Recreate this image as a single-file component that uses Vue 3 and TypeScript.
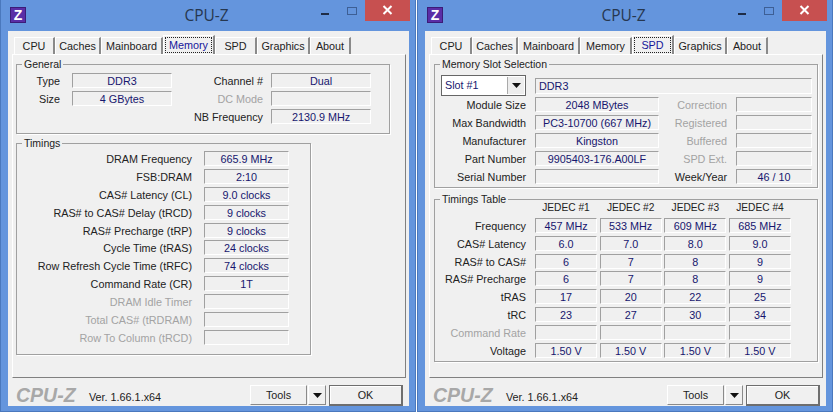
<script setup lang="ts">
interface Row { label: string; value: string; off?: boolean }

const tabs = [
  { name: 'CPU', width: 41 },
  { name: 'Caches', width: 46 },
  { name: 'Mainboard', width: 62 },
  { name: 'Memory', width: 52 },
  { name: 'SPD', width: 42 },
  { name: 'Graphics', width: 53 },
  { name: 'About', width: 41 },
]
const windows = ['Memory', 'SPD']

const timings: Row[] = [
  { label: 'DRAM Frequency', value: '665.9 MHz' },
  { label: 'FSB:DRAM', value: '2:10' },
  { label: 'CAS# Latency (CL)', value: '9.0 clocks' },
  { label: 'RAS# to CAS# Delay (tRCD)', value: '9 clocks' },
  { label: 'RAS# Precharge (tRP)', value: '9 clocks' },
  { label: 'Cycle Time (tRAS)', value: '24 clocks' },
  { label: 'Row Refresh Cycle Time (tRFC)', value: '74 clocks' },
  { label: 'Command Rate (CR)', value: '1T' },
  { label: 'DRAM Idle Timer', value: '', off: true },
  { label: 'Total CAS# (tRDRAM)', value: '', off: true },
  { label: 'Row To Column (tRCD)', value: '', off: true },
]
const slotRows = [
  { label: 'Module Size', value: '2048 MBytes', side: 'Correction', sideValue: '', off: true },
  { label: 'Max Bandwidth', value: 'PC3-10700 (667 MHz)', side: 'Registered', sideValue: '', off: true },
  { label: 'Manufacturer', value: 'Kingston', side: 'Buffered', sideValue: '', off: true },
  { label: 'Part Number', value: '9905403-176.A00LF', side: 'SPD Ext.', sideValue: '', off: true },
  { label: 'Serial Number', value: '', side: 'Week/Year', sideValue: '46 / 10', off: false },
]
const jedec = ['JEDEC #1', 'JEDEC #2', 'JEDEC #3', 'JEDEC #4']
const table = [
  { label: 'Frequency', values: ['457 MHz', '533 MHz', '609 MHz', '685 MHz'] },
  { label: 'CAS# Latency', values: ['6.0', '7.0', '8.0', '9.0'] },
  { label: 'RAS# to CAS#', values: ['6', '7', '8', '9'] },
  { label: 'RAS# Precharge', values: ['6', '7', '8', '9'] },
  { label: 'tRAS', values: ['17', '20', '22', '25'] },
  { label: 'tRC', values: ['23', '27', '30', '34'] },
  { label: 'Command Rate', values: ['', '', '', ''], off: true },
  { label: 'Voltage', values: ['1.50 V', '1.50 V', '1.50 V', '1.50 V'] },
]
</script>

<template>
  <div class="desktop">
    <section v-for="win in windows" :key="win" class="window">
      <header class="titlebar">
        <div class="title-left"><span class="app-icon">Z</span></div>
        <div class="title">CPU-Z</div>
        <div class="controls">
          <span class="minimize"></span>
          <span class="maximize"></span>
          <span class="close">
            <svg width="11" height="10" viewBox="0 0 11 10">
              <path d="M1.5 1 L9.5 9 M9.5 1 L1.5 9" stroke="#fff" stroke-width="2" fill="none" />
            </svg>
          </span>
        </div>
      </header>

      <div class="client">
        <nav class="tabs">
          <div
            v-for="tab in tabs"
            :key="tab.name"
            class="tab"
            :class="{ active: tab.name === win }"
            :style="{ width: tab.width + 'px' }"
          >
            <span class="tab-label">{{ tab.name }}</span>
          </div>
        </nav>

        <main class="panel">
          <template v-if="win === 'Memory'">
            <fieldset class="group general">
              <legend>General</legend>
              <div class="general-grid">
                <span class="label first">Type</span>
                <span class="field">DDR3</span>
                <span class="label second">Channel #</span>
                <span class="field">Dual</span>
                <span class="label first">Size</span>
                <span class="field">4 GBytes</span>
                <span class="label second off">DC Mode</span>
                <span class="field"></span>
                <span></span>
                <span></span>
                <span class="label second">NB Frequency</span>
                <span class="field">2130.9 MHz</span>
              </div>
            </fieldset>

            <fieldset class="group timings">
              <legend>Timings</legend>
              <div class="timing-grid">
                <template v-for="row in timings" :key="row.label">
                  <span class="label" :class="{ off: row.off }">{{ row.label }}</span>
                  <span class="field">{{ row.value }}</span>
                </template>
              </div>
            </fieldset>
          </template>

          <template v-else>
            <fieldset class="group slot">
              <legend>Memory Slot Selection</legend>
              <div class="slot-head">
                <div class="select">
                  <span class="select-text">Slot #1</span>
                  <span class="select-arrow">
                    <svg width="9" height="5" viewBox="0 0 9 5"><path d="M0 0 H9 L4.5 5 Z" fill="#111" /></svg>
                  </span>
                </div>
                <span class="field wide">DDR3</span>
              </div>
              <div class="slot-grid">
                <template v-for="row in slotRows" :key="row.label">
                  <span class="label">{{ row.label }}</span>
                  <span class="field">{{ row.value }}</span>
                  <span class="label" :class="{ off: row.off }">{{ row.side }}</span>
                  <span class="field">{{ row.sideValue }}</span>
                </template>
              </div>
            </fieldset>

            <fieldset class="group table-group">
              <legend>Timings Table</legend>
              <div class="jedec-head">
                <span></span>
                <span v-for="name in jedec" :key="name" class="jedec">{{ name }}</span>
              </div>
              <div class="jedec-grid">
                <template v-for="row in table" :key="row.label">
                  <span class="label" :class="{ off: row.off }">{{ row.label }}</span>
                  <span v-for="(value, i) in row.values" :key="i" class="field">{{ value }}</span>
                </template>
              </div>
            </fieldset>
          </template>
        </main>

        <footer class="footer">
          <span class="logo">CPU-Z</span>
          <span class="version">Ver. 1.66.1.x64</span>
          <div class="buttons">
            <button class="btn tools" type="button">Tools</button>
            <button class="btn arrow" type="button">
              <svg width="9" height="5" viewBox="0 0 9 5"><path d="M0 0 H9 L4.5 5 Z" fill="#111" /></svg>
            </button>
            <button class="btn ok" type="button">OK</button>
          </div>
        </footer>
      </div>
    </section>
  </div>
</template>

<style>
html, body { margin: 0; background: #fff; }
</style>

<style scoped>
* { box-sizing: border-box; }
.desktop {
  width: 833px;
  height: 416px;
  display: flex;
  gap: 1px;
  background: #fff;
  overflow: hidden;
  font-family: "Liberation Sans", Arial, sans-serif;
  font-size: 10.8px;
  color: #222;
}
.window {
  width: 416px;
  height: 412px;
  background: #6495dd;
  border: 1px solid #4a78bd;
  border-top: 0;
  padding: 0 6px 5px 7px;
  display: flex;
  flex-direction: column;
}
.titlebar {
  height: 31px;
  display: grid;
  grid-template-columns: 1fr auto 1fr;
  flex: none;
}
.title-left { padding: 7px 0 0 2px; }
.app-icon {
  display: block;
  width: 16px;
  height: 16px;
  background: #5a2ea6;
  border: 1px solid #3c1c78;
  color: #fff;
  font: 700 14px/14px "Liberation Sans", sans-serif;
  text-align: center;
}
.title {
  font: 15.5px/31px "Open Sans", sans-serif;
  color: #26374f;
  padding-right: 4px;
}
.controls {
  display: flex;
  justify-content: flex-end;
  align-items: flex-start;
  margin-right: -1px;
}
.minimize {
  width: 8px;
  height: 2px;
  margin: 13px 18px 0 0;
  background: #1e2c46;
}
.maximize {
  width: 10px;
  height: 8px;
  margin: 7px 8px 0 0;
  border: 1px solid #3d5f95;
}
.close {
  width: 45px;
  height: 21px;
  background: #c75050;
  display: flex;
  align-items: center;
  justify-content: center;
  padding-bottom: 2px;
}
.client {
  flex: 1;
  background: #f0f0f0;
  padding: 5px 3px 0 4px;
  display: flex;
  flex-direction: column;
  min-height: 0;
}
.tabs {
  display: flex;
  height: 18px;
  padding-left: 2px;
  position: relative;
  z-index: 1;
}
.tab {
  height: 17px;
  margin-top: 1px;
  border-top: 1px solid #fff;
  border-left: 1px solid #fff;
  border-right: 2px solid #8a8a8a;
  text-align: center;
  line-height: 17px;
  background: #f0f0f0;
}
.tab.active {
  height: 19px;
  margin-top: -1px;
  padding: 1px 1px 0;
  color: #15159a;
  line-height: 15px;
}
.tab.active .tab-label {
  display: block;
  height: 16px;
  border: 1px dotted #222;
}
.panel {
  width: 394px;
  height: 324px;
  flex: none;
  border-top: 1px solid #fff;
  border-left: 1px solid #fff;
  border-right: 1px solid #808080;
  border-bottom: 1px solid #808080;
  padding: 2px 0 0 3px;
}
.group {
  margin: 0;
  min-width: 0;
  border: 1px solid #a0a0a0;
  padding: 0;
  box-shadow: 1px 1px 0 #fff;
}
.group legend {
  margin-left: 5px;
  padding: 0 2px;
  font-size: 10.5px;
  line-height: 15px;
  height: 14px;
}
.label {
  height: 15px;
  text-align: right;
  line-height: 17px;
  white-space: nowrap;
  color: #222;
}
.label.off { color: #a3a3a3; }
.field {
  display: block;
  height: 15px;
  line-height: 14px;
  text-align: center;
  color: #16166e;
  border-top: 1px solid #a0a0a0;
  border-left: 1px solid #a0a0a0;
  border-right: 1px solid #fff;
  border-bottom: 1px solid #fff;
  white-space: nowrap;
  overflow: hidden;
}
.general { width: 374px; padding: 2px 0 9px; }
.general-grid {
  display: grid;
  grid-template-columns: 55px 100px 99px 100px;
  row-gap: 3px;
}
.label.first { padding-right: 12px; }
.label.second { padding-right: 8px; }
.timings { width: 295px; margin-top: 2px; padding: 1px 0 9px; }
.timing-grid {
  display: grid;
  grid-template-columns: 187px 85px;
  row-gap: 2.9px;
}
.timing-grid .label { padding-right: 12px; }
.slot { width: 384px; margin-left: 1px; padding: 4px 0 3px; }
.slot-head { display: flex; align-items: center; height: 21px; padding-left: 6px; margin-bottom: 1px; }
.select {
  width: 85px;
  height: 21px;
  border: 1px solid #666;
  background: #fff;
  display: flex;
  justify-content: space-between;
  box-shadow: inset 0 0 0 1px #fff;
}
.select-text { padding-left: 3px; line-height: 19px; color: #16166e; }
.select-arrow {
  width: 17px;
  margin: 1px;
  background: #ededed;
  border-left: 1px solid #aaa;
  display: flex;
  align-items: center;
  justify-content: center;
}
.field.wide {
  width: 277px;
  height: 16px;
  margin-left: 9px;
  text-align: left;
  padding-left: 3px;
  line-height: 15px;
}
.slot-grid {
  display: grid;
  grid-template-columns: 100px 124px 77px 76px;
  row-gap: 3px;
}
.slot-grid .label { padding-right: 9px; }
.table-group { width: 384px; margin: 4px 0 0 1px; padding: 0 0 3px; }
.jedec-head {
  display: grid;
  grid-template-columns: 100px repeat(4, 64.67px);
  height: 12px;
  margin: -4px 0 4px;
}
.jedec { font-size: 10.2px; text-align: center; line-height: 12px; padding-right: 2.67px; }
.jedec-grid {
  display: grid;
  grid-template-columns: 97.33px repeat(4, 62px);
  column-gap: 2.67px;
  row-gap: 2.8px;
}
.jedec-grid .label { padding-right: 6.33px; }
.footer {
  flex: 1;
  display: flex;
  align-items: center;
  padding: 4px 0 0 4px;
}
.logo {
  font: italic 700 19.5px/26px "Liberation Sans", sans-serif;
  color: #a8a8a8;
  width: 73px;
  flex: none;
}
.version { color: #222; padding-top: 4px; }
.buttons { margin-left: auto; display: flex; align-items: center; padding-right: 3px; }
.btn {
  font: 10.8px "Liberation Sans", sans-serif;
  color: #222;
  background: #f0f0f0;
  padding: 0;
  height: 20px;
  border-style: solid;
  border-width: 1px;
  border-color: #fff #8a8a8a #8a8a8a #fff;
}
.tools { width: 57px; }
.arrow { width: 18px; margin: 0 3px 0 1px; display: flex; align-items: center; justify-content: center; }
.ok {
  width: 74px;
  height: 21px;
  border: 1px solid #6e6e6e;
  border-right-width: 2px;
  border-bottom-width: 2px;
  box-shadow: inset 1px 1px 0 #fff;
}
</style>
